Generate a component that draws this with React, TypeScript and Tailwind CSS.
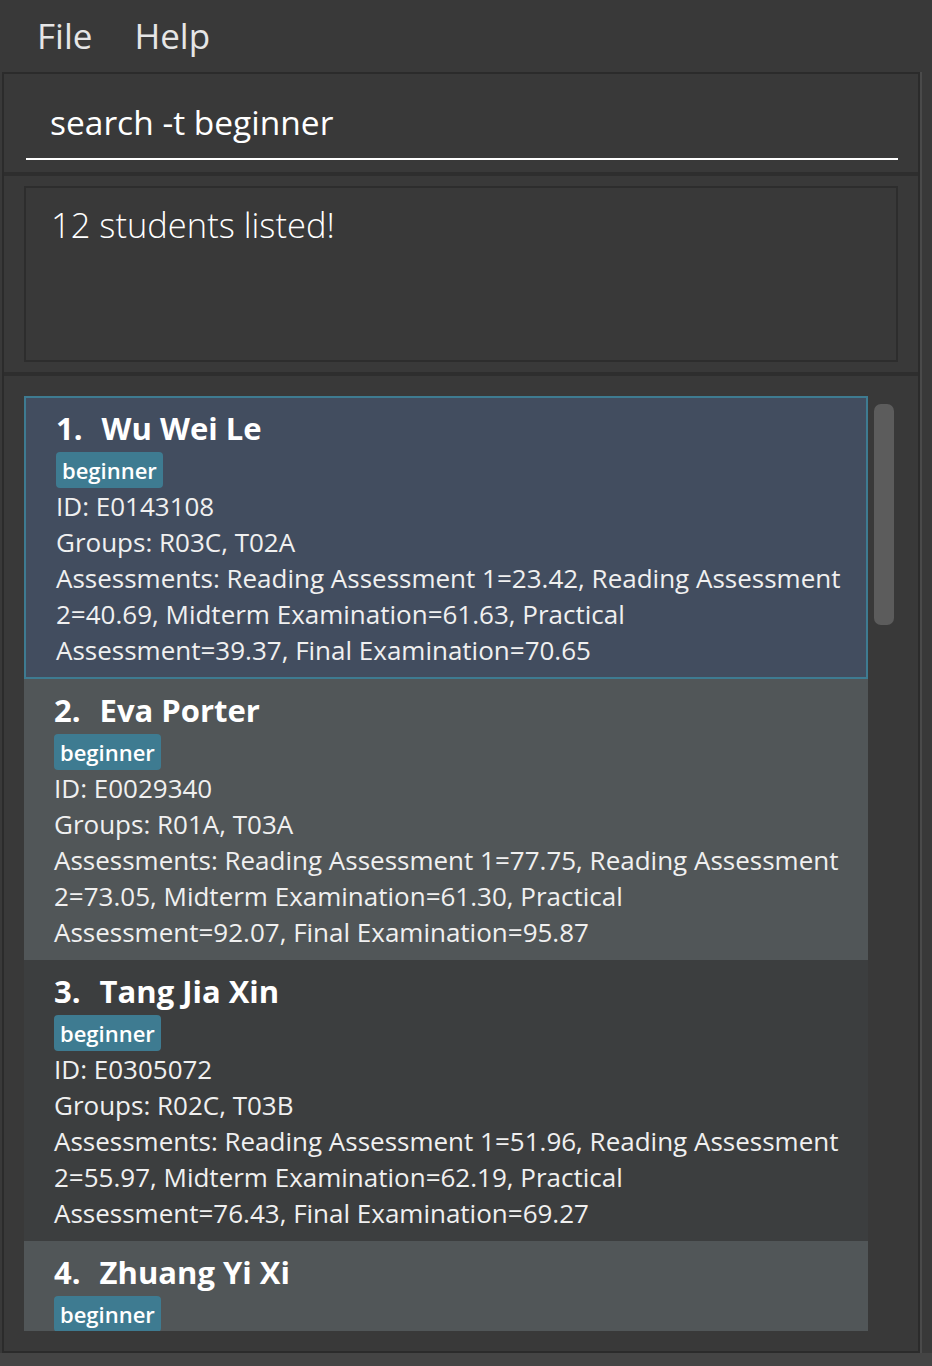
const students = [
  {
    name: "Wu Wei Le",
    id: "E0143108",
    groups: "R03C, T02A",
    assessments:
      "Reading Assessment 1=23.42, Reading Assessment 2=40.69, Midterm Examination=61.63, Practical Assessment=39.37, Final Examination=70.65",
  },
  {
    name: "Eva Porter",
    id: "E0029340",
    groups: "R01A, T03A",
    assessments:
      "Reading Assessment 1=77.75, Reading Assessment 2=73.05, Midterm Examination=61.30, Practical Assessment=92.07, Final Examination=95.87",
  },
  {
    name: "Tang Jia Xin",
    id: "E0305072",
    groups: "R02C, T03B",
    assessments:
      "Reading Assessment 1=51.96, Reading Assessment 2=55.97, Midterm Examination=62.19, Practical Assessment=76.43, Final Examination=69.27",
  },
  {
    name: "Zhuang Yi Xi",
    id: "E0210417",
    groups: "R01B, T01A",
    assessments:
      "Reading Assessment 1=64.20, Reading Assessment 2=58.11, Midterm Examination=70.02, Practical Assessment=81.50, Final Examination=66.48",
  },
];

function StudentCard({ s, index }: { s: (typeof students)[number]; index: number }) {
  const selected = index === 0;
  const bg = selected
    ? "bg-[#424d5f] border-2 border-[#3e7b91] pl-[30px] pt-[9px] pb-[9px]"
    : index % 2 === 1
      ? "bg-[#515658] pl-[30px] pt-[10px] pb-[10px]"
      : "bg-[#3c3e3f] pl-[30px] pt-[10px] pb-[10px]";
  return (
    <div className={`w-[844px] shrink-0 pr-[20px] text-[#f0f0f0] ${bg}`}>
      <div className="h-[42px] flex gap-[19px] text-[31px] leading-[42px] font-bold text-white">
        <span>{index + 1}.</span>
        <span>{s.name}</span>
      </div>
      <div className="mt-[3px] flex">
        <span className="h-[36px] px-[6px] rounded-[4px] bg-[#3e7b91] text-[22px] leading-[36px] font-semibold text-white">
          beginner
        </span>
      </div>
      <div className="text-[26px] leading-[36px]">ID: {s.id}</div>
      <div className="text-[26px] leading-[36px]">Groups: {s.groups}</div>
      <div className="text-[26px] leading-[36px]">Assessments: {s.assessments}</div>
    </div>
  );
}

export default function App() {
  return (
    <div
      className="w-[932px] h-[1366px] bg-[#393939] overflow-hidden flex flex-col"
      style={{ fontFamily: '"Open Sans", sans-serif' }}
    >
      {/* menu bar */}
      <div className="h-[72px] shrink-0 flex items-center gap-[42px] pl-[37px] pb-[2px] text-[#e6e6e6] text-[35px] leading-none">
        <span>File</span>
        <span>Help</span>
      </div>

      <div className="flex-1 min-h-0 flex pl-[2px]">
        {/* main panel */}
        <div className="w-[918px] flex flex-col border-2 border-[#2b2b2b] min-h-0">
          {/* command box */}
          <div className="h-[98px] shrink-0 pl-[22px] pr-[20px] flex flex-col">
            <div className="flex-1 flex items-center pl-[24px] pt-[12px] text-[33.5px] text-white">
              search -t beginner
            </div>
            <div className="h-[2px] bg-white mb-[12px]" />
          </div>
          <div className="h-[4px] shrink-0 bg-[#2e2e2e]" />

          {/* result display */}
          <div className="h-[196px] shrink-0 pt-[10px] px-[20px]">
            <div className="h-[176px] border-2 border-[#2d2d2d] pl-[25px] pt-[13px] text-[34.5px] font-light text-white leading-[48px]">
              12 students listed!
            </div>
          </div>
          <div className="h-[4px] shrink-0 bg-[#2e2e2e]" />

          {/* list */}
          <div className="flex-1 min-h-0 flex pt-[20px] pb-[20px] pl-[20px]">
            <div className="flex flex-col overflow-hidden">
              {students.map((s, i) => (
                <StudentCard key={s.id} s={s} index={i} />
              ))}
            </div>
            <div className="ml-[6px] pt-[8px]">
              <div className="w-[20px] h-[221px] rounded-[7px] bg-[#5c5c5c]" />
            </div>
          </div>
        </div>
        <div className="w-[2px] bg-[#4a4a4a]" />
      </div>
      <div className="h-[13px] shrink-0 bg-[#444444]" />
    </div>
  );
}
